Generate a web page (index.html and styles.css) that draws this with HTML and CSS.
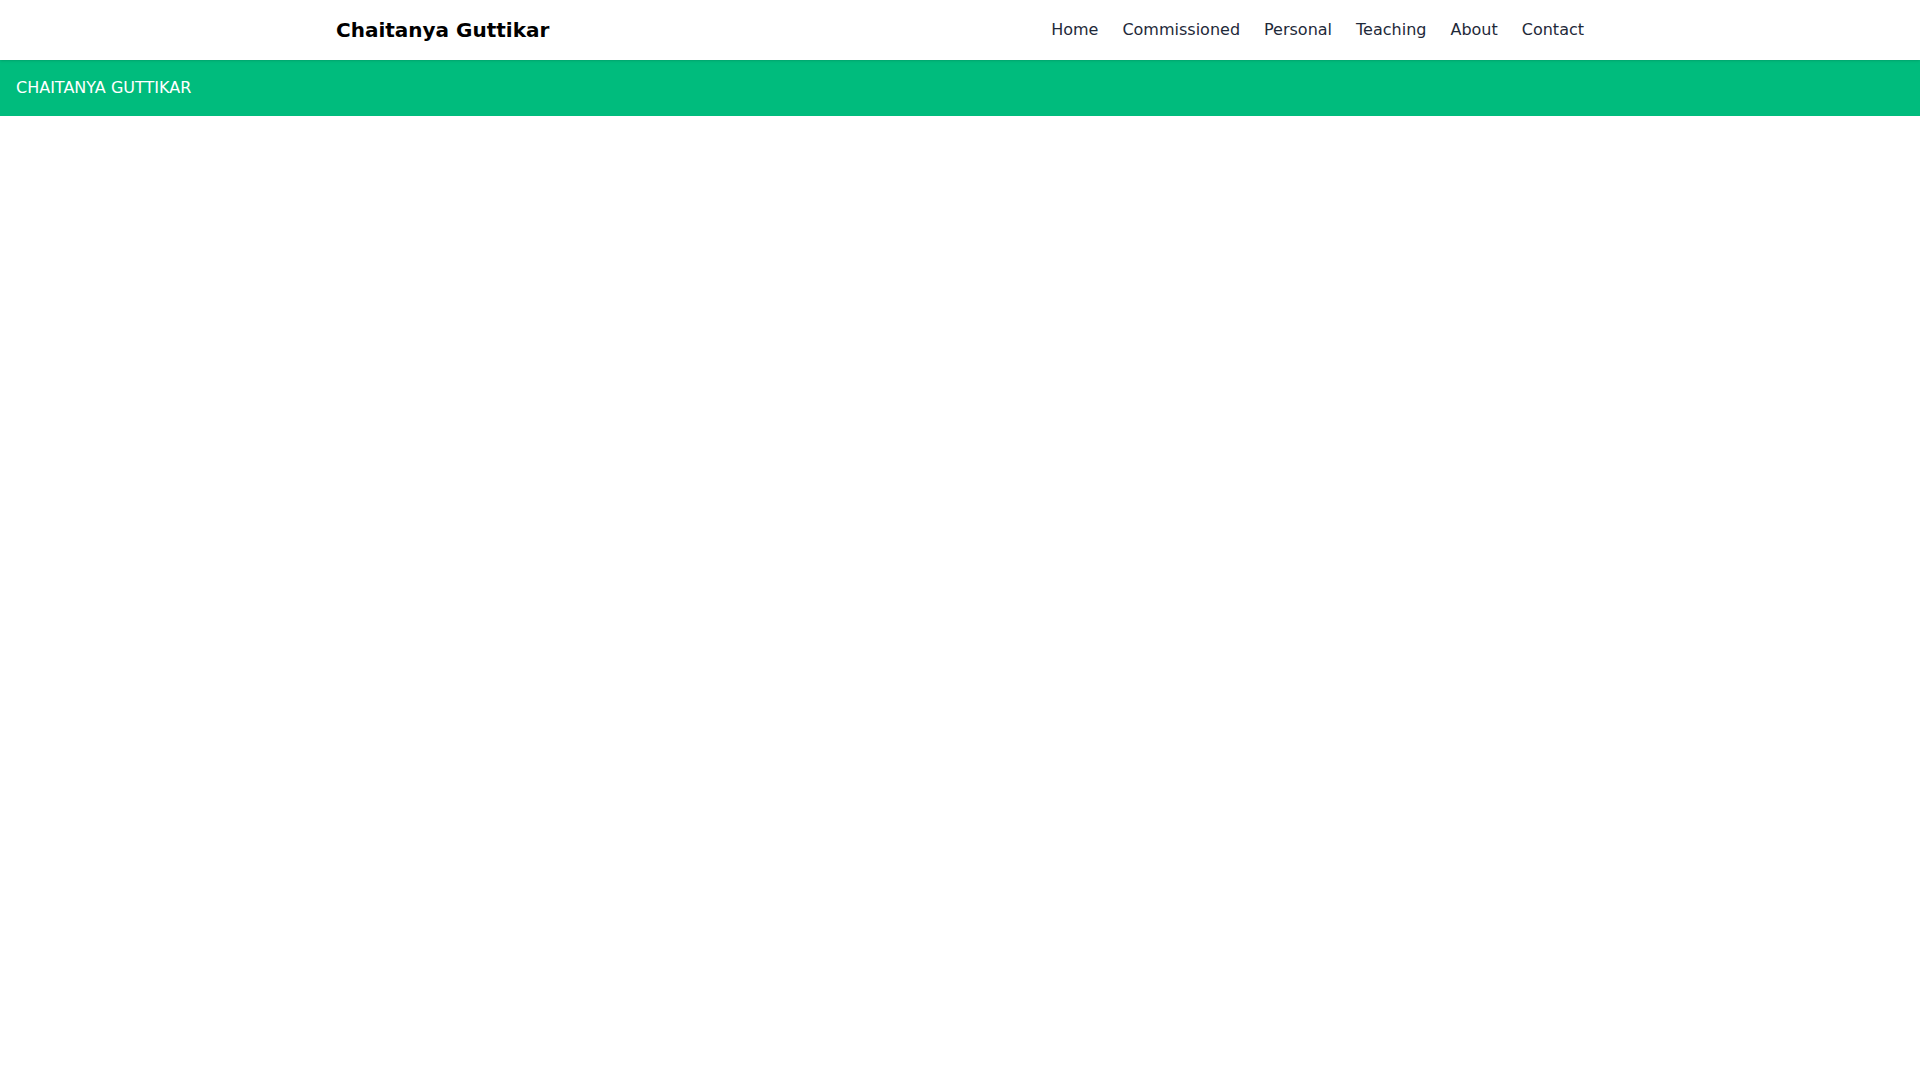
FILE: index.html
```html
<!DOCTYPE html>
<html lang="en">
<head>
<meta charset="utf-8">
<meta name="viewport" content="width=device-width, initial-scale=1">
<title>Chaitanya Guttikar</title>
<link rel="stylesheet" href="styles.css">
</head>
<body>
<header class="site-header">
  <div class="header-inner">
    <a class="brand" href="#">Chaitanya Guttikar</a>
    <nav class="site-nav">
      <a href="#">Home</a>
      <a href="#">Commissioned</a>
      <a href="#">Personal</a>
      <a href="#">Teaching</a>
      <a href="#">About</a>
      <a href="#">Contact</a>
    </nav>
  </div>
</header>
<main class="banner">CHAITANYA GUTTIKAR</main>
</body>
</html>
```

FILE: styles.css
```css
* {
  box-sizing: border-box;
}

body {
  margin: 0;
  background: #fff;
  color: #000;
  font-family: "DejaVu Sans", sans-serif;
  font-size: 16px;
  line-height: 24px;
}

a {
  color: inherit;
  text-decoration: none;
}

.site-header {
  position: sticky;
  top: 0;
  z-index: 10;
  background: #fff;
  box-shadow: 0 1px 3px rgba(0, 0, 0, 0.1), 0 1px 2px -1px rgba(0, 0, 0, 0.1);
}

.header-inner {
  display: flex;
  align-items: center;
  justify-content: space-between;
  max-width: 1280px;
  margin: 0 auto;
  padding: 16px;
}

.brand {
  font-size: 20px;
  line-height: 28px;
  font-weight: 700;
}

.site-nav {
  display: flex;
  gap: 24px;
  color: #1e2939;
}

.banner {
  padding: 16px;
  background: #00bc7d;
  color: #fff;
}
```
